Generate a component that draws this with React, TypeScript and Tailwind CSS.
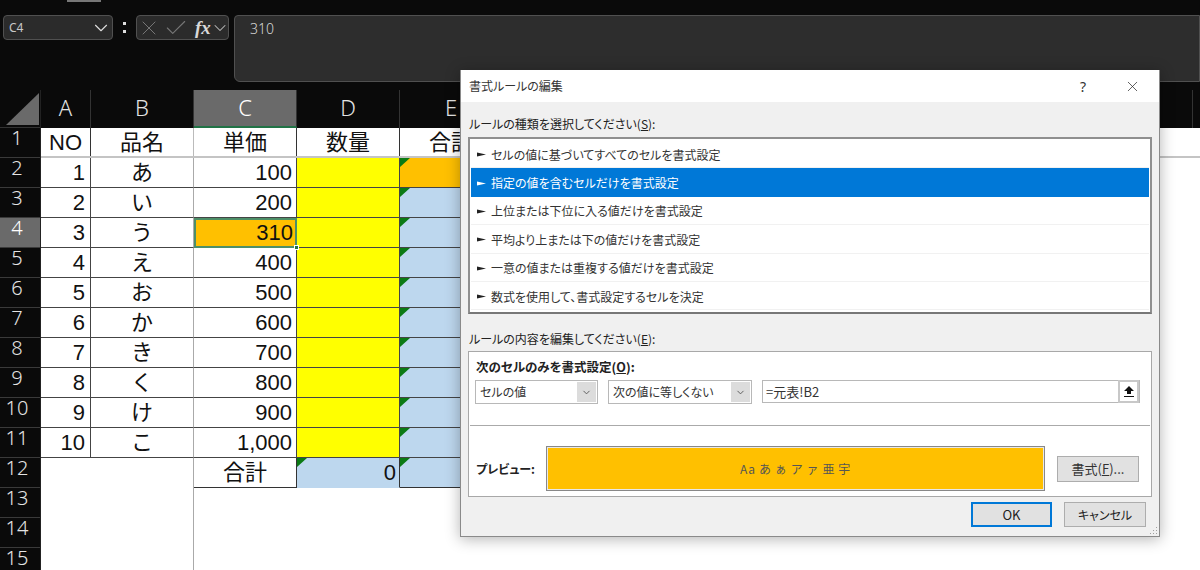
import { Check, ChevronDown, X } from 'lucide-react';

const cols = ['A', 'B', 'C', 'D', 'E'];

const items = [
    { no: '1', name: 'あ', price: '100' },
    { no: '2', name: 'い', price: '200' },
    { no: '3', name: 'う', price: '310' },
    { no: '4', name: 'え', price: '400' },
    { no: '5', name: 'お', price: '500' },
    { no: '6', name: 'か', price: '600' },
    { no: '7', name: 'き', price: '700' },
    { no: '8', name: 'く', price: '800' },
    { no: '9', name: 'け', price: '900' },
    { no: '10', name: 'こ', price: '1,000' },
];

const rules = [
    'セルの値に基づいてすべてのセルを書式設定',
    '指定の値を含むセルだけを書式設定',
    '上位または下位に入る値だけを書式設定',
    '平均より上または下の値だけを書式設定',
    '一意の値または重複する値だけを書式設定',
    '数式を使用して、書式設定するセルを決定',
];

const ui = "font-['Noto_Sans_CJK_JP',sans-serif] [font-feature-settings:'palt']";
const cell = "font-['Liberation_Sans','Noto_Sans_CJK_JP',sans-serif] text-[22px] leading-[29px] text-[#111] border-b border-r";

function Flag() {
    return (
        <svg width="10" height="9" viewBox="0 0 10 9" className="absolute left-0 top-0">
            <path d="M0 0H10L0 9Z" fill="#0b7a14" />
        </svg>
    );
}

function RowHead({ n, active }: { n: number; active?: boolean }) {
    return (
        <div
            className={`h-[30px] border-b border-[#3a3a3a] pr-[6px] text-center font-['Noto_Sans',sans-serif] text-[20px] font-light leading-[20px] ${
                active ? 'bg-[#6a6a6a] text-white' : 'bg-[#0a0a0a] text-[#e4e4e4]'
            }`}
        >
            {n}
        </div>
    );
}

function TopBar() {
    return (
        <div className="relative flex h-[90px] items-start gap-[5px] bg-[#0a0a0a] pl-[3px] pt-[15px]">
            <div className="absolute left-[67px] top-0 h-[2px] w-[34px] bg-[#777]" />
            <div className="flex h-[25px] w-[110px] items-center justify-between rounded-[4px] border border-[#505050] bg-[#2b2b2b] pl-[5px] font-['Noto_Sans',sans-serif] text-[12px] text-[#c8c8c8]">
                C4
                <ChevronDown size={22} strokeWidth={1.25} className="shrink-0 text-[#dcdcdc]" />
            </div>
            <div className="flex h-[25px] w-[13px] flex-col items-center justify-center gap-[5px]">
                <div className="h-[3px] w-[3px] bg-[#ddd]" />
                <div className="h-[3px] w-[3px] bg-[#ddd]" />
            </div>
            <div className="flex h-[25px] w-[93px] items-center overflow-hidden rounded-[4px] border border-[#505050] bg-[#2b2b2b] text-[#777]">
                <X size={24} strokeWidth={1} className="shrink-0" />
                <Check size={26} strokeWidth={1} className="ml-[2px] shrink-0" />
                <span className="ml-[6px] w-[16px] shrink-0 font-['Liberation_Serif',serif] text-[19px] font-bold italic leading-none text-[#d8d8d8]">fx</span>
                <ChevronDown size={20} strokeWidth={1.25} className="-ml-[1px] shrink-0 text-[#bbb]" />
            </div>
            <div className="h-[67px] flex-1 rounded-tl-[4px] rounded-bl-[6px] border border-[#505050] bg-[#2d2d2d] pl-[15px] pt-[2px] font-['Noto_Sans',sans-serif] text-[14px] font-light text-[#d8d8d8]">
                310
            </div>
        </div>
    );
}

function Sheet() {
    return (
        <div className="flex">
            {/* row header */}
            <div className="w-[41px] shrink-0 border-r border-[#222] bg-[#0a0a0a]">
                <div className="h-[38px] border-b border-[#333] bg-[#0a0a0a]">
                    <svg width="40" height="38" viewBox="0 0 40 38">
                        <path d="M6 35L39 3V35Z" fill="#6a6a6a" />
                    </svg>
                </div>
                {Array.from({ length: 15 }).map((_, i) => (
                    <RowHead key={i} n={i + 1} active={i + 1 === 4} />
                ))}
            </div>

            <div className="min-w-0 flex-1">
                {/* column header */}
                <div className="flex h-[38px] bg-[#0a0a0a] text-center font-['Noto_Sans',sans-serif] text-[22px] font-light leading-[35px] text-[#e4e4e4]">
                    {cols.map((c) => (
                        <div
                            key={c}
                            className={`h-[38px] ${c === 'A' ? 'w-[50px]' : 'w-[103px]'} border-r border-[#333] ${
                                c === 'C' ? 'border-b-2 border-b-[#217346] bg-[#6a6a6a] text-white' : ''
                            }`}
                        >
                            {c}
                        </div>
                    ))}
                    <div className="h-[38px] w-[690px] border-r border-[#333]" />
                </div>

                {/* row 1 */}
                <div className="flex h-[30px] border-b-2 border-[#c4c4c4] bg-white text-center">
                    <div className={`${cell} h-[28px] w-[50px] border-[#333] border-b-0`}>NO</div>
                    <div className={`${cell} h-[28px] w-[103px] border-[#bbb] border-b-0`}>品名</div>
                    <div className={`${cell} h-[28px] w-[103px] border-[#333] border-b-0`}>単価</div>
                    <div className={`${cell} h-[28px] w-[103px] border-[#333] border-b-0`}>数量</div>
                    <div className={`${cell} h-[28px] w-[103px] border-[#333] border-b-0`}>合計</div>
                </div>

                {/* data rows */}
                {items.map((item, i) => (
                    <div key={item.no} className="flex h-[30px]">
                        <div className={`${cell} h-[30px] w-[50px] border-[#444] pr-[5px] text-right`}>{item.no}</div>
                        <div className={`${cell} h-[30px] w-[103px] border-r-[#aaa] border-b-[#444] text-center`}>{item.name}</div>
                        {item.price === '310' ? (
                            <div className="relative h-[30px] w-[103px] border-2 border-[#4d8f68] bg-[#ffc000] pr-[2px] text-right font-['Liberation_Sans',sans-serif] text-[22px] leading-[26px] text-[#111]">
                                {item.price}
                                <div className="absolute -bottom-[4px] -right-[4px] h-[5px] w-[5px] border border-white bg-[#217346]" />
                            </div>
                        ) : (
                            <div className={`${cell} h-[30px] w-[103px] border-[#444] pr-[4px] text-right ${item.price === '900' ? 'pr-[3px] text-[20px]' : ''}`}>
                                {item.price}
                            </div>
                        )}
                        <div className={`${cell} h-[30px] w-[103px] border-[#444] bg-[#ffff00]`} />
                        <div className={`${cell} relative h-[30px] w-[103px] border-[#444] ${i === 0 ? 'bg-[#ffc000]' : 'bg-[#bdd7ee]'}`}>
                            <Flag />
                        </div>
                    </div>
                ))}

                {/* total row */}
                <div className="flex h-[30px]">
                    <div className="h-[30px] w-[153px] border-r border-[#aaa]" />
                    <div className={`${cell} h-[30px] w-[103px] border-[#333] text-center`}>合計</div>
                    <div className={`${cell} relative h-[30px] w-[103px] border-r-[#333] border-b-[#bdd7ee] bg-[#bdd7ee] pr-[3px] text-right`}>
                        <Flag />0
                    </div>
                    <div className={`${cell} relative h-[30px] w-[103px] border-r-[#333] border-b-[#333] bg-[#bdd7ee]`}>
                        <Flag />
                    </div>
                </div>

                <div className="h-[82px] w-[153px] border-r border-[#aaa]" />
            </div>
        </div>
    );
}

function Combo({ label, width }: { label: string; width: string }) {
    return (
        <div className={`flex h-[24px] ${width} items-stretch border border-[#b8b8b8] bg-white p-px text-[#333]`}>
            <span className="flex-1 pl-[3px] text-[12px] leading-[20px]">{label}</span>
            <div className="flex w-[19px] items-center justify-center bg-[#dcdcdc]">
                <ChevronDown size={11} className="text-[#555]" />
            </div>
        </div>
    );
}

function Dialog() {
    return (
        <div className={`${ui} absolute left-[460px] top-[70px] h-[467px] w-[700px] border-r border-b border-l border-[#8a8a8a] bg-[#f0f0f0] shadow-[0_2px_14px_rgba(0,0,0,0.3)]`}>
            {/* title bar */}
            <div className="flex h-[32px] items-center justify-between bg-white pl-[8px] pr-[18px] text-[12px] text-[#333]">
                <span>書式ルールの編集</span>
                <div className="flex items-center gap-[38px]">
                    <span className="font-['Noto_Sans',sans-serif] text-[14px]">?</span>
                    <X size={17} strokeWidth={1} className="text-[#222]" />
                </div>
            </div>

            <div className="px-[7px]">
                <div className="h-[35px] pl-px pt-[12px] text-[12px] leading-[20px] text-[#222]">
                    ルールの種類を選択してください(<span className="underline">S</span>):
                </div>

                {/* rule list */}
                <div className="h-[177px] w-[684px] border-2 border-[#8f8f8f] border-b-[#777] bg-white px-px pt-px">
                    {rules.map((r, i) => (
                        <div
                            key={r}
                            className={`flex h-[28.4px] items-center gap-[5px] pl-[6px] text-[12px] ${
                                i === 1 ? 'bg-[#0078d7] pt-px text-white' : 'border-b border-[#f1f1f1] pt-[2px] text-[#333]'
                            }`}
                        >
                            <svg width="9" height="7" viewBox="0 0 9 7">
                                <path d="M0 1.5L9 3.5L0 5.5Z" fill={i === 1 ? '#fff' : '#222'} />
                            </svg>
                            {r}
                        </div>
                    ))}
                </div>

                <div className="h-[37px] pl-px pt-[15px] text-[12px] leading-[20px] text-[#222]">
                    ルールの内容を編集してください(<span className="underline">E</span>):
                </div>

                {/* rule editor */}
                <div className="h-[146px] w-[684px] border border-[#a8a8a8] bg-white">
                    <div className="h-[28px] pl-[7px] pt-[5px] text-[12.5px] font-bold leading-[20px] text-[#222]">
                        次のセルのみを書式設定(<span className="underline">O</span>):
                    </div>
                    <div className="flex items-start gap-[10px] pl-[6px]">
                        <Combo label="セルの値" width="w-[123px]" />
                        <Combo label="次の値に等しくない" width="w-[144px]" />
                        <div className="flex h-[23px] w-[378px] items-center justify-between border border-[#b8b8b8] pl-[3px] text-[13px] text-[#333]">
                            =元表!B2
                            <div className="flex h-[23px] w-[21px] items-center justify-center border-2 border-[#c8c8c8] bg-white">
                                <svg width="12" height="13" viewBox="0 0 12 13">
                                    <path d="M6 1L11 6H8V9H4V6H1Z M1 11H11V12H1Z" fill="#111" />
                                </svg>
                            </div>
                        </div>
                    </div>
                    <div className="mx-[1px] mt-[21px] h-[1px] bg-[#aaa]" />
                    <div className="mt-[20px] flex items-center pl-[7px]">
                        <span className="w-[70px] text-[12px] font-bold text-[#222]">プレビュー:</span>
                        <div className="h-[45px] w-[499px] border border-[#888] bg-[#e8e8e8] p-px">
                            <div className="flex h-full items-center justify-center bg-[#ffc000] font-['Noto_Sans_CJK_JP',monospace] text-[12px] tracking-[0.6px] text-[#555] [font-feature-settings:normal]">
                                Aa あ ぁ ア ァ 亜 宇
                            </div>
                        </div>
                        <div className="ml-[12px] flex h-[26px] w-[82px] items-center justify-center border border-[#adadad] bg-[#e1e1e1] text-[13px] text-[#333]">
                            書式(<span className="underline">F</span>)...
                        </div>
                    </div>
                </div>

                {/* dialog buttons */}
                <div className="flex justify-end gap-[12px] pr-[6px] pt-[5px] text-[12px] text-[#222]">
                    <div className="flex h-[25px] w-[81px] items-center justify-center border-2 border-[#0078d7] bg-[#e1e1e1] text-[13px]">OK</div>
                    <div className="flex h-[25px] w-[82px] items-center justify-center border border-[#adadad] bg-[#e1e1e1]">キャンセル</div>
                </div>
            </div>

            {/* resize grip */}
            <svg width="9" height="9" viewBox="0 0 9 9" className="absolute bottom-[1px] right-[1px]">
                <path d="M7 1h1v1H7ZM4 4h1v1H4ZM7 4h1v1H7ZM1 7h1v1H1ZM4 7h1v1H4ZM7 7h1v1H7Z" fill="#a0a0a0" />
            </svg>
        </div>
    );
}

export default function App() {
    return (
        <div className="relative h-[570px] w-[1200px] overflow-hidden bg-white">
            <TopBar />
            <Sheet />
            <Dialog />
        </div>
    );
}
